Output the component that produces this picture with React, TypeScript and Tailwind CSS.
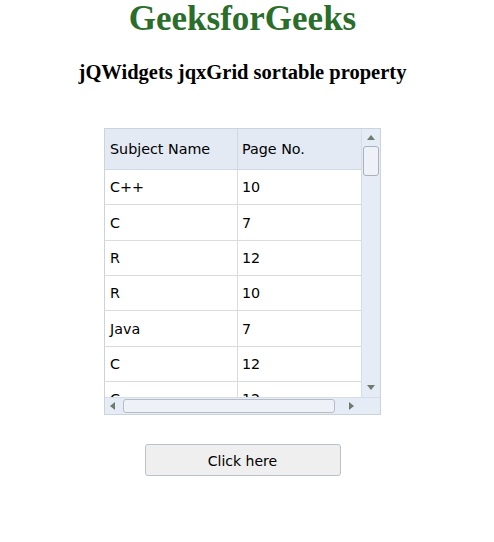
const rows = [
  ['C++', '10'],
  ['C', '7'],
  ['R', '12'],
  ['R', '10'],
  ['Java', '7'],
  ['C', '12'],
  ['C', '12'],
]

function Arrow({ dir }: { dir: 'up' | 'down' | 'left' | 'right' }) {
  const pts = {
    up: '0,5 4,0 8,5',
    down: '0,0 8,0 4,5',
    left: '5,0 5,8 0,4',
    right: '0,0 0,8 5,4',
  }[dir]
  const vertical = dir === 'up' || dir === 'down'
  return (
    <svg width={vertical ? 8 : 5} height={vertical ? 5 : 8} className="block">
      <polygon points={pts} fill="#6f7b70" />
    </svg>
  )
}

export default function App() {
  return (
    <div className="w-[485px] flex flex-col items-center" style={{ fontFamily: 'DejaVu Sans, Verdana, sans-serif' }}>
      <h1
        className="text-[35px] leading-[38px] font-bold text-[#2b6e2b] text-center"
        style={{ fontFamily: '"Liberation Serif", "Times New Roman", serif' }}>
        GeeksforGeeks
      </h1>
      <h3
        className="mt-[22px] text-[20.5px] leading-[24px] font-bold text-black text-center"
        style={{ fontFamily: '"Liberation Serif", "Times New Roman", serif' }}>
        jQWidgets jqxGrid sortable property
      </h3>

      <div className="mt-[44px] w-[277px] h-[287px] border border-[#cbd4de] flex flex-col overflow-hidden text-[14.3px] text-black">
        <div className="flex h-[268px]">
          <div className="flex-1 flex flex-col overflow-hidden">
            <div className="h-[41px] shrink-0 flex bg-[#e3eaf4] border-b border-[#d2d9e2]">
              <div className="w-[133px] border-r border-[#cfd7e1] flex items-center pl-[5px] pt-[2px]">Subject Name</div>
              <div className="flex-1 flex items-center pl-[4px] pt-[2px]">Page No.</div>
            </div>
            {rows.map((r, i) => (
              <div key={i} className="h-[35.33px] shrink-0 flex border-b border-[#dcdcdc] bg-white">
                <div className="w-[133px] border-r border-[#dcdcdc] flex items-center pl-[5px] pt-[2px]">{r[0]}</div>
                <div className="flex-1 flex items-center pl-[4px] pt-[2px]">{r[1]}</div>
              </div>
            ))}
          </div>
          <div className="w-[19px] bg-[#e6ecf5] border-l border-[#d6dde6] flex flex-col items-center">
            <div className="mt-[6px]">
              <Arrow dir="up" />
            </div>
            <div className="mt-[6px] w-[16px] h-[30px] rounded-[3px] border border-[#a9b1ba] bg-[#eef2f8]" />
            <div className="flex-1" />
            <div className="mb-[7px]">
              <Arrow dir="down" />
            </div>
          </div>
        </div>
        <div className="flex flex-1 bg-[#e6ecf5] border-t border-[#d6dde6]">
          <div className="flex-1 flex items-center pl-[5px] pr-[4px]">
            <Arrow dir="left" />
            <div className="ml-[8px] flex-1 h-[14px] rounded-[3px] border border-[#b4bcc6] bg-[#eef2f8]" />
            <div className="ml-[14px] mr-[3px]">
              <Arrow dir="right" />
            </div>
          </div>
          <div className="w-[19px]" />
        </div>
      </div>

      <button className="mt-[29px] w-[196px] h-[32px] pt-[2px] rounded-[3px] border border-[#b9c2cc] bg-[#efefef] text-[14px] text-black">
        Click here
      </button>
    </div>
  )
}
